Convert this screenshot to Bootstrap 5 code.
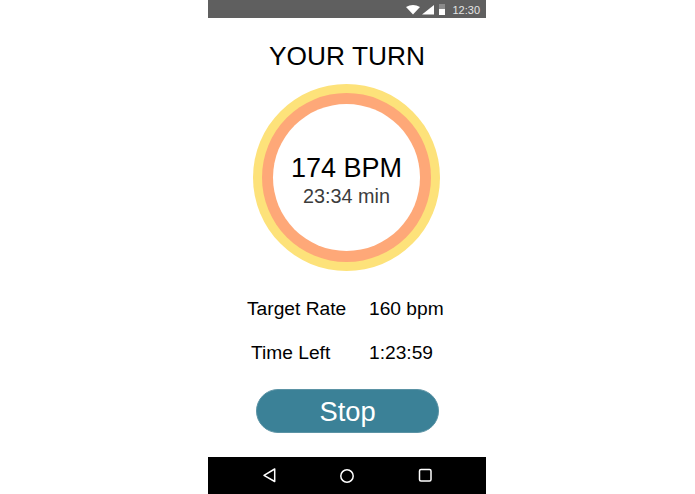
<!DOCTYPE html>
<html lang="en">
<head>
  <meta charset="UTF-8">
  <title>Your Turn</title>
  <meta name="viewport" content="width=device-width, initial-scale=1">
  <link href="https://cdn.jsdelivr.net/npm/bootstrap@5.3.3/dist/css/bootstrap.min.css" rel="stylesheet">
  <style>
    html, body { height: 100%; }
    body {
      background: #fff;
      color: #000;
      font-family: "Liberation Sans", Arial, sans-serif;
      overflow: hidden;
    }
    .phone { width: 278px; height: 494px; margin-left: 208px; }
    .status-strip { height: 18px; background: #5f5f5f; color: #e4e4e4; font-size: 11px; padding-right: 6px; gap: 5px; }
    .clock-text { margin: 2px 0 0 2px; }
    .turn-title { font-size: 26.300px; font-weight: 400; line-height: 32px; margin: 22px 0 12px; }
    .ring-outer { width: 187px; height: 187px; background: #fde27a; margin-right: 1px; }
    .ring-middle { width: 169px; height: 169px; background: #fea878; }
    .ring-inner { width: 147px; height: 147px; background: #fff; }
    .bpm-text { font-size: 27px; line-height: 32px; margin-top: 5px; }
    .min-text { font-size: 19.800px; line-height: 25px; color: #3c3c3c; }
    .stat-rows { margin-top: 23px; font-size: 19.200px; line-height: 30px; }
    .stat-line { height: 30px; margin-bottom: 14px; }
    .stat-line:last-child { margin-bottom: 21px; }
    .stat-label { width: 161px; padding-left: 39px; }
    .stat-label-short { padding-left: 43px; }
    .stop-btn {
      width: 183px; height: 44px; margin: 0 0 0 48px; padding: 1px 0 0;
      background: #3b8197; border: 1px solid #5b93a5; border-radius: 22px;
      color: #fff; font-size: 27.300px; line-height: 40px;
    }
    .nav-strip { height: 37px; background: #000; margin-top: 24px; }
    .nav-strip svg { display: block; }
  </style>
</head>
<body>
  <div class="phone d-flex flex-column">
    <div class="status-strip d-flex align-items-center justify-content-end">
      <svg width="28" height="11" viewBox="0 0 28 11">
        <path d="M0 3Q7-1 14 3L7 10.500Z" fill="#fff"/>
        <path d="M16 10.500L28 1V10.500Z" fill="#fff"/>
      </svg>
      <svg width="6" height="12" viewBox="0 0 6 12">
        <rect x="0" y="1" width="6" height="11" fill="#8a8a8a"/>
        <rect x="0" y="6" width="6" height="6" fill="#fff"/>
      </svg>
      <span class="clock-text">12:30</span>
    </div>

    <h1 class="turn-title text-center">YOUR TURN</h1>

    <div class="d-flex justify-content-center">
      <div class="ring-outer rounded-circle d-flex align-items-center justify-content-center">
        <div class="ring-middle rounded-circle d-flex align-items-center justify-content-center">
          <div class="ring-inner rounded-circle d-flex flex-column align-items-center justify-content-center">
            <div class="bpm-text">174 BPM</div>
            <div class="min-text">23:34 min</div>
          </div>
        </div>
      </div>
    </div>

    <div class="stat-rows">
      <div class="stat-line d-flex"><div class="stat-label">Target Rate</div><div>160 bpm</div></div>
      <div class="stat-line d-flex"><div class="stat-label stat-label-short">Time Left</div><div>1:23:59</div></div>
    </div>

    <button type="button" class="btn stop-btn">Stop</button>

    <div class="nav-strip d-flex align-items-center">
      <svg width="278" height="37" viewBox="0 0 278 37" fill="none" stroke="#fff" stroke-width="1.500">
        <path d="M66.700 12V24.500L56 18.300Z" stroke-linejoin="round"/>
        <circle cx="139" cy="19" r="6.200"/>
        <rect x="211.500" y="12.500" width="11.500" height="11.500" rx="1.500"/>
      </svg>
    </div>
  </div>

  <script src="https://cdn.jsdelivr.net/npm/bootstrap@5.3.3/dist/js/bootstrap.bundle.min.js"></script>
</body>
</html>
